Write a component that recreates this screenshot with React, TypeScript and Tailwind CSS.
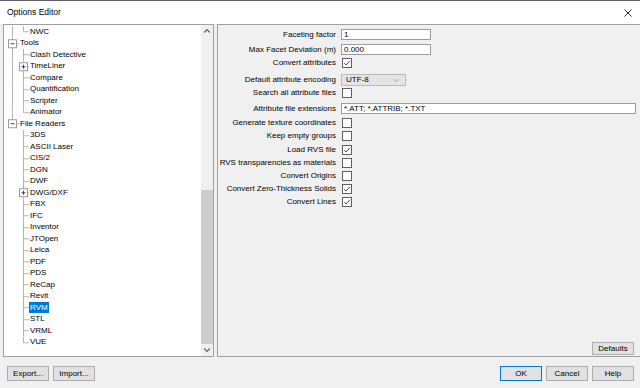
import React from "react";

type Row = {
  label: string;
  kind: "root" | "child";
  above?: boolean;
  below?: boolean;
  rootLine?: boolean;
  last?: boolean;
  exp?: boolean;
  selected?: boolean;
};

const rows: Row[] = [
  { label: "NWC", kind: "child", rootLine: true, last: true },
  { label: "Tools", kind: "root", above: true, below: true },
  { label: "Clash Detective", kind: "child", rootLine: true },
  { label: "TimeLiner", kind: "child", rootLine: true, exp: true },
  { label: "Compare", kind: "child", rootLine: true },
  { label: "Quantification", kind: "child", rootLine: true },
  { label: "Scripter", kind: "child", rootLine: true },
  { label: "Animator", kind: "child", rootLine: true, last: true },
  { label: "File Readers", kind: "root", above: true, below: false },
  { label: "3DS", kind: "child" },
  { label: "ASCII Laser", kind: "child" },
  { label: "CIS/2", kind: "child" },
  { label: "DGN", kind: "child" },
  { label: "DWF", kind: "child" },
  { label: "DWG/DXF", kind: "child", exp: true },
  { label: "FBX", kind: "child" },
  { label: "IFC", kind: "child" },
  { label: "Inventor", kind: "child" },
  { label: "JTOpen", kind: "child" },
  { label: "Leica", kind: "child" },
  { label: "PDF", kind: "child" },
  { label: "PDS", kind: "child" },
  { label: "ReCap", kind: "child" },
  { label: "Revit", kind: "child" },
  { label: "RVM", kind: "child", selected: true },
  { label: "STL", kind: "child" },
  { label: "VRML", kind: "child" },
  { label: "VUE", kind: "child", last: true },
];

const H = 11.5;
const C = 5.75;
const LINE = "#b4b4b4";

function Connector({ row }: { row: Row }) {
  if (row.kind === "root") {
    return (
      <svg width={15} height={H} viewBox={`0 0 15 ${H}`} className="shrink-0">
        {row.above && <line x1={8.5} y1={0} x2={8.5} y2={1.75} stroke={LINE} />}
        {row.below && <line x1={8.5} y1={9.75} x2={8.5} y2={H} stroke={LINE} />}
        <rect x={4.5} y={1.75} width={8} height={8} fill="#fff" stroke="#9a9a9a" />
        <line x1={6.5} y1={C} x2={10.5} y2={C} stroke="#404040" />
        <line x1={12.5} y1={C} x2={15} y2={C} stroke={LINE} />
      </svg>
    );
  }
  return (
    <svg width={25} height={H} viewBox={`0 0 25 ${H}`} className="shrink-0">
      {row.rootLine && <line x1={8.5} y1={0} x2={8.5} y2={H} stroke={LINE} />}
      <line x1={19.5} y1={0} x2={19.5} y2={row.last ? C : H} stroke={LINE} />
      <line x1={19.5} y1={C} x2={25} y2={C} stroke={LINE} />
      {row.exp && (
        <>
          <rect x={15.5} y={1.75} width={8} height={8} fill="#fff" stroke="#9a9a9a" />
          <line x1={17.5} y1={C} x2={21.5} y2={C} stroke="#404040" />
          <line x1={19.5} y1={3.75} x2={19.5} y2={7.75} stroke="#404040" />
        </>
      )}
    </svg>
  );
}

function TreeRow({ row }: { row: Row }) {
  return (
    <div className="flex items-center h-[11.5px] whitespace-nowrap">
      <Connector row={row} />
      <span
        className={
          row.selected
            ? "h-[11px] flex items-center px-[1px] bg-[#0078d7] text-white"
            : "h-[11px] flex items-center px-[1px]"
        }
      >
        {row.label}
      </span>
    </div>
  );
}

function Scrollbar() {
  return (
    <div className="w-[12px] bg-[#f0f0f0] flex flex-col shrink-0">
      <div className="h-[12px] flex items-center justify-center">
        <svg width="8" height="6" viewBox="0 0 8 6">
          <path d="M1.2 4.5 L4 1.7 L6.8 4.5" fill="none" stroke="#606060" strokeWidth="1.2" />
        </svg>
      </div>
      <div className="flex-1 flex flex-col">
        <div className="h-[153px]" />
        <div className="flex-1 bg-[#cdcdcd]" />
      </div>
      <div className="h-[12px] flex items-center justify-center">
        <svg width="8" height="6" viewBox="0 0 8 6">
          <path d="M1.2 1.5 L4 4.3 L6.8 1.5" fill="none" stroke="#606060" strokeWidth="1.2" />
        </svg>
      </div>
    </div>
  );
}

function Checkbox({ checked }: { checked: boolean }) {
  return (
    <div className="ml-[1px] w-[10px] h-[10px] border border-[#5f5f5f] bg-white flex items-center justify-center">
      {checked && (
        <svg width="8" height="8" viewBox="0 0 8 8">
          <path d="M1.2 4.2 L3.1 6 L6.9 1.8" fill="none" stroke="#333" strokeWidth="0.9" />
        </svg>
      )}
    </div>
  );
}

function TextBox({ value, wide }: { value: string; wide?: boolean }) {
  return (
    <div
      className={
        wide
          ? "w-[295px] h-[11px] border border-[#9c9c9c] bg-white flex items-center pl-[2px]"
          : "w-[90px] h-[11px] border border-[#9c9c9c] bg-white flex items-center pl-[2px]"
      }
    >
      {value}
    </div>
  );
}

function Select() {
  return (
    <div className="w-[65px] h-[12px] border border-[#b9b9b9] bg-[#e5e5e5] flex items-center justify-between pl-[4px] pr-[5px]">
      <span>UTF-8</span>
      <svg width="7" height="5" viewBox="0 0 7 5">
        <path d="M1 1.2 L3.5 3.7 L6 1.2" fill="none" stroke="#9a9a9a" strokeWidth="0.9" />
      </svg>
    </div>
  );
}

type Opt = { label: string; cls: string; control: React.ReactNode };

const opts: Opt[] = [
  { label: "Faceting factor", cls: "flex items-center mt-[4px] h-[11px]", control: <TextBox value="1" /> },
  { label: "Max Facet Deviation (m)", cls: "flex items-center mt-[4px] h-[11px]", control: <TextBox value="0.000" /> },
  { label: "Convert attributes", cls: "flex items-center mt-[3px] h-[10px]", control: <Checkbox checked /> },
  { label: "Default attribute encoding", cls: "flex items-center mt-[6px] h-[12px]", control: <Select /> },
  { label: "Search all attribute files", cls: "flex items-center mt-[2px] h-[10px]", control: <Checkbox checked={false} /> },
  { label: "Attribute file extensions", cls: "flex items-center mt-[5px] h-[11px]", control: <TextBox value="*.ATT; *.ATTRIB; *.TXT" wide /> },
  { label: "Generate texture coordinates", cls: "flex items-center mt-[4px] h-[10px]", control: <Checkbox checked={false} /> },
  { label: "Keep empty groups", cls: "flex items-center mt-[3px] h-[10px]", control: <Checkbox checked={false} /> },
  { label: "Load RVS file", cls: "flex items-center mt-[4px] h-[10px]", control: <Checkbox checked /> },
  { label: "RVS transparencies as materials", cls: "flex items-center mt-[3px] h-[10px]", control: <Checkbox checked={false} /> },
  { label: "Convert Origins", cls: "flex items-center mt-[3px] h-[10px]", control: <Checkbox checked={false} /> },
  { label: "Convert Zero-Thickness Solids", cls: "flex items-center mt-[3px] h-[10px]", control: <Checkbox checked /> },
  { label: "Convert Lines", cls: "flex items-center mt-[3px] h-[10px]", control: <Checkbox checked /> },
];

function Button({ children, primary }: { children: React.ReactNode; primary?: boolean }) {
  return (
    <div
      className={
        primary
          ? "w-[42px] h-[15px] border border-[#0078d7] bg-[#e1e1e1] flex items-center justify-center"
          : "w-[42px] h-[15px] border border-[#adadad] bg-[#e1e1e1] flex items-center justify-center"
      }
    >
      {children}
    </div>
  );
}

export default function App() {
  return (
    <div className="w-[640px] h-[388px] bg-[#f0f0f0] flex flex-col overflow-hidden font-['Liberation_Sans',Arial,sans-serif] text-[8px] leading-none text-black select-none">
      {/* Title bar */}
      <div className="h-[24px] shrink-0 bg-white border-t border-[#635c66] flex items-center justify-between pl-[7px] pr-[8px]">
        <span className="text-[8.5px]">Options Editor</span>
        <svg width="8" height="8" viewBox="0 0 8 8">
          <path d="M0.5 0.5 L7.5 7.5 M7.5 0.5 L0.5 7.5" stroke="#111" strokeWidth="0.9" />
        </svg>
      </div>

      {/* Middle */}
      <div className="flex h-[333px] shrink-0 pl-[3px]">
        <div className="w-[211px] border border-[#a0a0a0] bg-white flex overflow-hidden">
          <div className="flex-1 pt-[1px] flex flex-col overflow-hidden">
            {rows.map((r) => (
              <TreeRow key={r.label} row={r} />
            ))}
          </div>
          <Scrollbar />
        </div>

        <div className="ml-[3px] flex-1 border-l border-t border-b border-[#a0a0a0] flex flex-col">
          {opts.map((o) => (
            <div key={o.label} className={o.cls}>
              <div className="w-[118px] text-right whitespace-nowrap">{o.label}</div>
              <div className="ml-[5px]">{o.control}</div>
            </div>
          ))}
          <div className="mt-auto mb-[1px] mr-[6px] flex justify-end">
            <div className="w-[42px] h-[13px] border border-[#adadad] bg-[#e1e1e1] flex items-center justify-center">
              Defaults
            </div>
          </div>
        </div>
      </div>

      {/* Bottom bar */}
      <div className="flex-1 flex items-start pt-[9px] pl-[7px] pr-[6px]">
        <div className="flex gap-[4px]">
          <Button>Export...</Button>
          <Button>Import...</Button>
        </div>
        <div className="ml-auto flex gap-[4px]">
          <Button primary>OK</Button>
          <Button>Cancel</Button>
          <Button>Help</Button>
        </div>
      </div>
    </div>
  );
}
